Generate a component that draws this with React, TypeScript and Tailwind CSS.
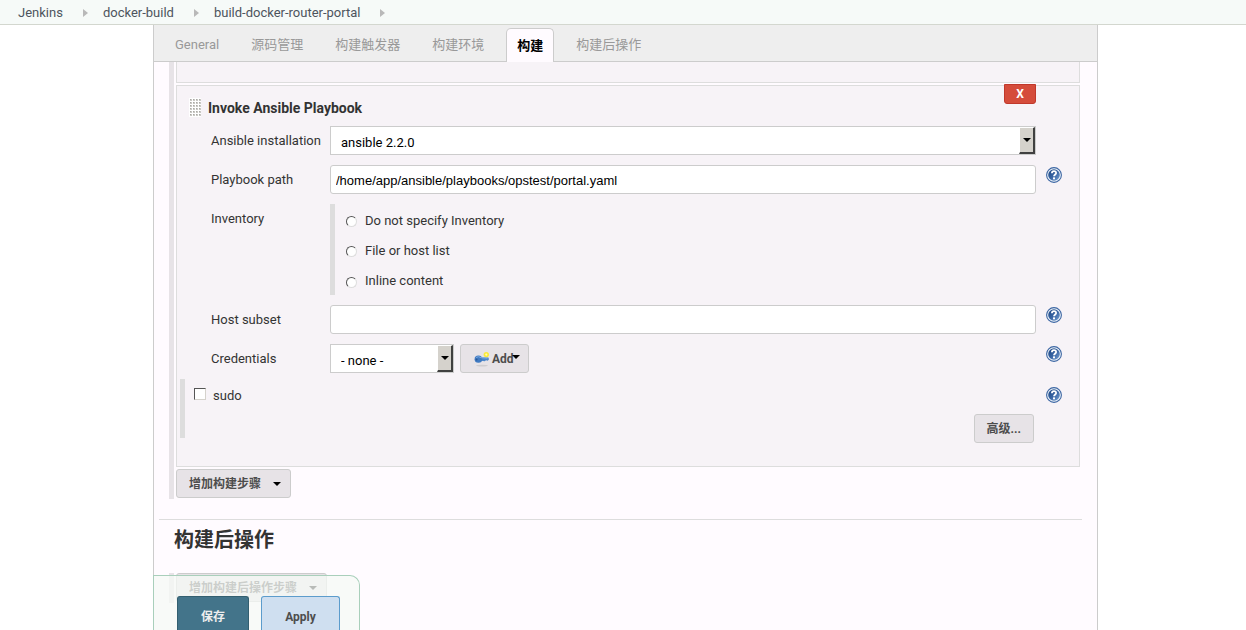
import type { ReactNode } from "react";

function Crumb({ children }: { children: ReactNode }) {
  return (
    <li className="flex items-center">
      <a href="#" className="text-[#4d545d]">{children}</a>
      <svg width="5" height="8" viewBox="0 0 5 8" className="ml-5" aria-hidden="true">
        <path d="M0 0 L5 4 L0 8 Z" fill="#b9b9b9" />
      </svg>
    </li>
  );
}

function Caret({ className = "fill-black" }: { className?: string }) {
  return (
    <svg width="8" height="4" viewBox="0 0 8 4" className={className} aria-hidden="true">
      <path d="M0 0 H8 L4 4 Z" />
    </svg>
  );
}

function HelpIcon({ label }: { label: string }) {
  return (
    <button type="button" aria-label={label} className="block h-4 w-4 shrink-0">
      <svg width="16" height="16" viewBox="0 0 16 16" aria-hidden="true">
        <defs>
          <linearGradient id="help-fill" x1="0" y1="0" x2="1" y2="1">
            <stop offset="0" stopColor="#1c4480" />
            <stop offset="0.5" stopColor="#3965a3" />
            <stop offset="1" stopColor="#7ba3d3" />
          </linearGradient>
        </defs>
        <circle cx="8" cy="8" r="7.4" fill="#f1f6fb" stroke="#3b65a2" strokeWidth="1.1" />
        <circle cx="8" cy="8" r="5.8" fill="url(#help-fill)" />
        <path d="M5.9 6.2 C5.9 3.5 10.1 3.5 10.1 5.9 C10.1 7.4 8.1 7.5 8 9.3" fill="none" stroke="#fff" strokeWidth="1.8" />
        <rect x="7" y="10.4" width="2" height="1.9" fill="#fff" />
      </svg>
    </button>
  );
}

function KeyIcon() {
  return (
    <svg width="16" height="16" viewBox="0 0 16 16" aria-hidden="true">
      <ellipse cx="8" cy="14.6" rx="6" ry="0.8" fill="#cfcdd0" />
      <path d="M6 6.6 L14.4 6.6 L15 8.2 L13.8 9.8 L12 9.2 L10.8 10.2 L7 9.8 Z" fill="#4b86cb" />
      <ellipse cx="4.4" cy="8.2" rx="3.8" ry="3.6" fill="#3f7ac2" />
      <path d="M2 6.5 Q4.5 4.8 7 6.7 L13.5 7.2" fill="none" stroke="#7dabe0" strokeWidth="1" />
      <circle cx="2.6" cy="8.4" r="1" fill="#2a5695" />
      <circle cx="12.3" cy="3.6" r="2.7" fill="#fbea38" />
      <circle cx="12.3" cy="3.6" r="1.1" fill="#fffbb5" />
    </svg>
  );
}

function DragHandle() {
  return (
    <svg width="12" height="19" viewBox="0 0 12 19" aria-hidden="true">
      <defs>
        <pattern id="grip" width="3" height="3" patternUnits="userSpaceOnUse">
          <rect width="3" height="3" fill="#fff" />
          <rect x="1" y="1" width="2" height="2" fill="#c9c8c4" />
          <rect x="1" y="1" width="1" height="1" fill="#aaa9a5" />
        </pattern>
      </defs>
      <rect width="12" height="19" fill="url(#grip)" />
    </svg>
  );
}

function Select({ id, value, className }: { id: string; value: string; className: string }) {
  return (
    <div className={`relative ${className}`}>
      <select id={id} className="block h-[29px] w-full appearance-none border border-[#ccc] bg-white pt-1 pl-[10px] text-black">
        <option>{value}</option>
      </select>
      <span className="pointer-events-none absolute inset-y-px right-px flex w-4 items-center justify-center border-t border-r-2 border-b-2 border-l border-t-white border-r-[#404040] border-b-[#404040] border-l-white bg-[#d5d2cc]">
        <Caret />
      </span>
    </div>
  );
}

function TextField({ id, value }: { id: string; value?: string }) {
  return (
    <input
      id={id}
      type="text"
      defaultValue={value}
      className="block h-[29px] w-full min-w-0 flex-1 rounded-[3px] border border-[#ccc] bg-white px-[5px] pt-px font-['Liberation_Sans','Noto_Sans_CJK_SC',sans-serif] text-black"
    />
  );
}

function Row({ label, htmlFor, help, children }: { label: string; htmlFor?: string; help?: boolean; children: ReactNode }) {
  return (
    <div className="flex">
      {htmlFor ? (
        <label htmlFor={htmlFor} className="w-[119px] shrink-0 leading-[30px]">{label}</label>
      ) : (
        <span id="inventory-label" className="w-[119px] shrink-0 leading-[30px]">{label}</span>
      )}
      <div className="flex h-fit min-w-0 flex-1">{children}</div>
      <div className="ml-[10px] w-4 shrink-0 pt-[2px]">{help && <HelpIcon label={`Help: ${label}`} />}</div>
    </div>
  );
}

const tabs = ["General", "源码管理", "构建触发器", "构建环境", "构建", "构建后操作"];
const inventoryOptions = ["Do not specify Inventory", "File or host list", "Inline content"];
const greyButton = "flex h-[29px] items-center rounded-[3px] border border-[#ccc] bg-[#e7e3e7] pt-px text-xs font-bold text-[#4d4d4d]";

export default function App() {
  return (
    <div className="min-h-screen bg-white font-['Roboto','Noto_Sans_CJK_SC',sans-serif] text-[13px] text-[#333]">
      <nav aria-label="Breadcrumb" className="border-b border-[#d3d7cf] bg-[#f6faf8]">
        <ol className="flex h-6 items-center gap-[15px] pt-px pl-[18px]">
          <Crumb>Jenkins</Crumb>
          <Crumb>docker-build</Crumb>
          <Crumb>build-docker-router-portal</Crumb>
        </ol>
      </nav>

      <div className="pr-[148px] pl-[153px]">
        <main className="min-h-[605px] border-x border-[#ccc] bg-[#fffbff]">
          <div role="tablist" className="flex h-[37px] items-end gap-3 border-b border-[#ccc] bg-[#eee] pl-[11px]">
            {tabs.map((tab) =>
              tab === "构建" ? (
                <button key={tab} role="tab" aria-selected="true" className="-mb-px h-[34px] rounded-t-[5px] border border-b-0 border-[#ccc] bg-[#fffbff] px-[10px] font-bold text-black">
                  {tab}
                </button>
              ) : (
                <button key={tab} role="tab" aria-selected="false" className="h-[34px] px-[10px] pt-[2px] text-[#999]">
                  {tab}
                </button>
              ),
            )}
          </div>

          <section className="pr-[17px] pl-[15px]">
            <div className="border-l-[5px] border-[#e7e3e7] pb-px pl-[2px]">
              <div className="h-[21px] border border-t-0 border-[#ddd] bg-[#f7f3f7]" />

              <div className="relative mt-[2px] border border-[#ddd] bg-[#f7f3f7] pb-7">
                <button type="button" aria-label="Delete step" className="absolute -top-[2px] right-[43px] h-5 w-8 rounded-b-[3px] border border-[#c0382b] bg-[#d54c3b] text-xs leading-none font-bold text-white">
                  X
                </button>
                <h3 className="flex h-10 items-center gap-[7px] pt-[3px] pl-3 text-sm font-bold">
                  <DragHandle />
                  Invoke Ansible Playbook
                </h3>

                <div className="flex flex-col gap-[9px] pr-[17px] pl-[34px]">
                  <Row label="Ansible installation" htmlFor="installation">
                    <Select id="installation" value="ansible 2.2.0" className="flex-1" />
                  </Row>
                  <Row label="Playbook path" htmlFor="playbook" help>
                    <TextField id="playbook" value="/home/app/ansible/playbooks/opstest/portal.yaml" />
                  </Row>
                  <Row label="Inventory">
                    <div role="radiogroup" aria-labelledby="inventory-label" className="mb-px flex flex-col border-l-[5px] border-[#ddd] pl-[11px]">
                      {inventoryOptions.map((option) => (
                        <label key={option} className="flex h-[30px] items-center gap-2 pt-[3px] last:h-[31px]">
                          <input type="radio" name="inventory" className="mt-[2px] h-[11px] w-[11px] appearance-none rounded-full border border-t-[#555] border-r-[#ddd] border-b-[#ddd] border-l-[#555] bg-white" />
                          {option}
                        </label>
                      ))}
                    </div>
                  </Row>
                  <Row label="Host subset" htmlFor="subset" help>
                    <TextField id="subset" />
                  </Row>
                  <Row label="Credentials" htmlFor="credentials" help>
                    <Select id="credentials" value="- none -" className="w-[124px]" />
                    <button type="button" className={`${greyButton} ml-[6px] w-[69px] pl-[13px]`}>
                      <KeyIcon />
                      <span className="ml-[2px]">Add</span>
                      <Caret className="-mt-1 -ml-[2px] shrink-0 fill-black" />
                    </button>
                  </Row>
                </div>

                <div className="mt-[5px] ml-[3px] flex h-[59px] justify-between border-l-[5px] border-[#ddd] pr-[17px]">
                  <label className="flex h-[31px] items-center gap-[7px] pt-[3px] pl-[9px]">
                    <input type="checkbox" className="-mt-[5px] h-3 w-3 appearance-none border border-t-[#555] border-r-[#d5d2cc] border-b-[#d5d2cc] border-l-[#555] bg-white" />
                    sudo
                  </label>
                  <div className="flex flex-col items-end gap-[11px] pt-2">
                    <HelpIcon label="Help: sudo" />
                    <button type="button" className={`${greyButton} mr-7 shrink-0 px-3`}>
                      高级...
                    </button>
                  </div>
                </div>
              </div>

              <button type="button" className={`${greyButton} mt-[2px] gap-3 px-[9px] pl-3`}>
                增加构建步骤
                <Caret />
              </button>
            </div>
          </section>

          <section className="pt-5 pr-[15px] pl-[5px]">
            <div className="border-t border-[#ddd] pl-[10px]">
              <h2 className="pt-[5px] pl-[5px] text-xl leading-[30px] font-bold">构建后操作</h2>
              <div className="mt-[18px] border-l-[5px] border-[#e7e3e7] pb-px pl-[2px]">
                <button type="button" className={`${greyButton} gap-3 pr-[9px] pl-3`}>
                  增加构建后操作步骤
                  <Caret />
                </button>
              </div>
            </div>
          </section>
        </main>
      </div>

      <div className="fixed bottom-0 left-[153px] flex h-[55px] gap-3 rounded-tr-[10px] border border-b-0 border-[#a9cfbb] bg-[#f6faf5]/75 pt-5 pr-[19px] pl-[23px]">
        <button type="button" className="w-[72px] rounded-t-[3px] border border-b-0 border-[#335f70] bg-[#43748a] pt-[6px] text-xs font-bold text-[#eee]">
          保存
        </button>
        <button type="button" className="w-[79px] rounded-t-[3px] border border-b-0 border-[#5c9ccc] bg-[#cfdff0] pt-[6px] text-xs font-bold text-[#4d4d4d]">
          Apply
        </button>
      </div>
    </div>
  );
}
